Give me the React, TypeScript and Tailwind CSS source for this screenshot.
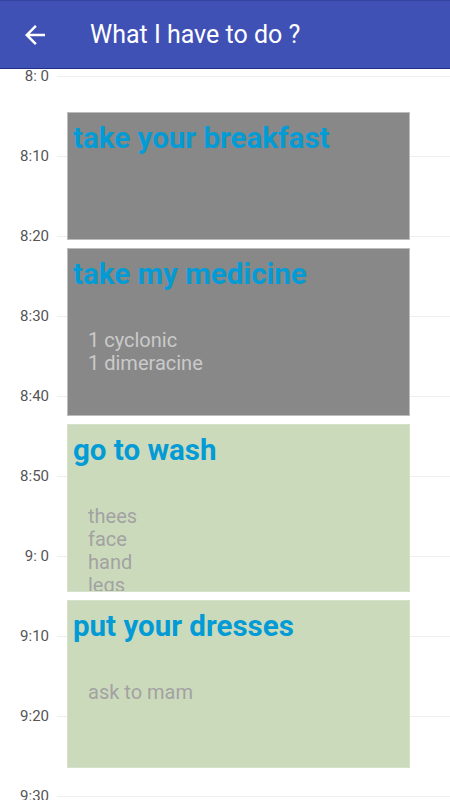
import React from "react";

const times = ["8: 0", "8:10", "8:20", "8:30", "8:40", "8:50", "9: 0", "9:10", "9:20", "9:30"];

type Ev = { title: string; lines: string[]; kind: "gray" | "green"; h: string };

const events: Ev[] = [
  { title: "take your breakfast", lines: [], kind: "gray", h: "h-[128px]" },
  { title: "take my medicine", lines: ["1 cyclonic", "1 dimeracine"], kind: "gray", h: "h-[168px]" },
  { title: "go to wash", lines: ["thees", "face", "hand", "legs"], kind: "green", h: "h-[168px]" },
  { title: "put your dresses", lines: ["ask to mam"], kind: "green", h: "h-[168px]" },
];

export default function App() {
  return (
    <div
      className="w-[450px] h-[800px] overflow-hidden bg-white flex flex-col"
      style={{ fontFamily: "Roboto, 'Noto Sans', sans-serif" }}
    >
      <div className="h-[69px] shrink-0 bg-[#3f51b5] border-t border-t-[#34449c] border-b border-b-[#1f2f8a] flex items-center">
        <svg viewBox="0 0 24 24" className="w-[30px] h-[30px] ml-[20px]" fill="white">
          <path d="M20 11H7.83l5.59-5.59L12 4l-8 8 8 8 1.41-1.41L7.83 13H20v-2z" />
        </svg>
        <div className="ml-[40px] text-white text-[25px] font-normal leading-none">What I have to do ?</div>
      </div>
      <div className="relative flex-1">
        <div className="flex flex-col">
          {times.map((t) => (
            <div key={t} className="h-[80px] shrink-0">
              <div className="h-[14px] flex items-center">
                <div className="w-[49px] text-right text-[15px] font-normal leading-none text-[#555555] shrink-0">{t}</div>
                <div className="ml-[8px] flex-1 h-px bg-[#eeeeee]" />
              </div>
            </div>
          ))}
        </div>
        <div className="absolute inset-0 flex flex-col gap-[8px] pt-[43px] pl-[67px]">
          {events.map((e) => (
            <div
              key={e.title}
              className={
                "w-[343px] shrink-0 overflow-hidden border " +
                e.h +
                " " +
                (e.kind === "gray" ? "bg-[#888888] border-[#bdbdbd]" : "bg-[#ccdabc] border-[#d6e1c9]")
              }
            >
              <div className="pl-[5px] pt-[8px] text-[29.5px] font-bold leading-[34px] text-[#039bd5]">{e.title}</div>
              <div
                className={
                  "pl-[20px] mt-[38px] text-[20px] leading-[23px] " +
                  (e.kind === "gray" ? "text-[#cacaca]" : "text-[#a2a2a2]")
                }
              >
                {e.lines.map((l) => (
                  <div key={l}>{l}</div>
                ))}
              </div>
            </div>
          ))}
        </div>
      </div>
    </div>
  );
}
